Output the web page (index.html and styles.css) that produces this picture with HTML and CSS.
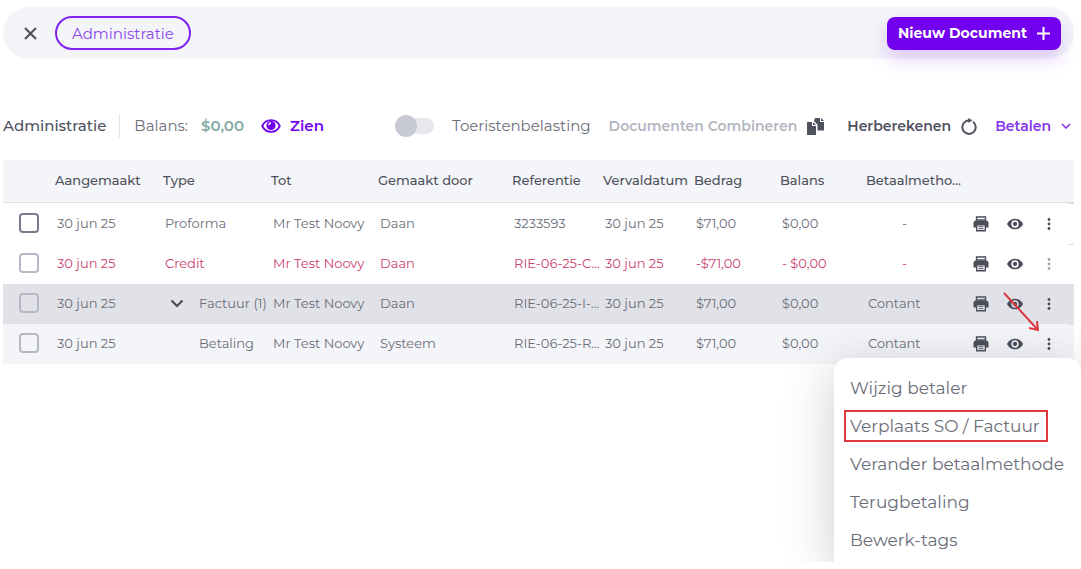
FILE: index.html
```html
<!DOCTYPE html>
<html lang="nl">
<head>
    <meta charset="UTF-8">
    <meta name="viewport" content="width=device-width, initial-scale=1.0">
    <title>Administratie</title>
    <link rel="stylesheet" href="styles.css">
</head>
<body>

<!-- Shared icons -->
<svg class="sprite" aria-hidden="true">
    <symbol id="icon-print" viewBox="0 0 16 16">
        <path d="M3.5 1h9v3h-9z" fill="none" stroke="currentColor" stroke-width="1.4"/>
        <path d="M3 4.5h10a2.5 2.5 0 0 1 2.5 2.5v4.500H.5V7A2.500 2.500 0 0 1 3 4.500z"/>
        <path d="M3.700 8.700h8.600v6H3.700z" fill="#fff" stroke="currentColor" stroke-width="1.400"/>
        <path d="M5.500 10.200h5v1h-5zM5.500 12.200h5v1h-5z"/>
    </symbol>
    <symbol id="icon-eye" viewBox="0 0 24 24">
        <path fill-rule="evenodd" d="M12 4C6.500 4 2 7.500 0 12c2 4.500 6.500 8 12 8s10-3.500 12-8c-2-4.500-6.500-8-12-8zm0 13.500a5.500 5.500 0 1 1 0-11 5.500 5.500 0 0 1 0 11zm0-2.300a3.200 3.200 0 1 0 0-6.400 3.200 3.200 0 0 0 0 6.400z"/>
    </symbol>
    <symbol id="icon-dots" viewBox="0 0 4 14">
        <circle cx="2" cy="2.500" r="1.400"/><circle cx="2" cy="7" r="1.400"/><circle cx="2" cy="11.500" r="1.400"/>
    </symbol>
</svg>

<header class="topbar">
    <button class="close" aria-label="Sluiten">
        <svg width="13" height="13" viewBox="0 0 13 13"><path d="M1 1l11 11M12 1L1 12"/></svg>
    </button>
    <button class="tab">Administratie</button>
    <button class="new-doc">Nieuw Document
        <svg width="13" height="13" viewBox="0 0 13 13"><path d="M6.500 0v13M0 6.500h13"/></svg>
    </button>
</header>

<main>
    <div class="toolbar">
        <h1>Administratie</h1>
        <div class="balance">
            <span>Balans:</span>
            <strong>$0,00</strong>
            <a class="view" href="#">
                <svg width="20" height="14" viewBox="0 0 20 14">
                    <path d="M1.200 7C3 3.200 6.200 1.200 10 1.200S17 3.200 18.800 7C17 10.800 13.800 12.800 10 12.800S3 10.800 1.200 7z" fill="none" stroke="currentColor" stroke-width="1.800"/>
                    <circle cx="10" cy="6.500" r="4.600"/>
                    <path d="M7.800 6.200A2.300 2.300 0 0 1 10 4" fill="none" stroke="#fff" stroke-width="1.300"/>
                </svg>
                Zien
            </a>
        </div>
        <label class="switch"><input type="checkbox" role="switch">Toeristenbelasting</label>
        <div class="actions">
            <button class="combine" disabled>Documenten Combineren
                <svg width="17" height="17" viewBox="0 0 17 17">
                    <path d="M0 4h5v4h4v9H0z"/><path d="M6 4l3 3H6z"/>
                    <path d="M8 0h5v4h4v8.500h-6.500V6.500L7 3z"/><path d="M14 0l3 3h-3z"/>
                </svg>
            </button>
            <button class="recalc">Herberekenen
                <svg width="16" height="17" viewBox="0 0 16 17">
                    <path d="M12 3.800A6.700 6.700 0 1 1 4.500 3.500Q6 2.500 8 2.400" fill="none" stroke="currentColor" stroke-width="2"/>
                    <path d="M7 0l4.500 2.200L7.500 5z"/>
                </svg>
            </button>
            <button class="pay">Betalen
                <svg width="10" height="6" viewBox="0 0 10 6"><path d="M1 1l4 4 4-4" fill="none" stroke="currentColor" stroke-width="1.600"/></svg>
            </button>
        </div>
    </div>

    <table class="documents">
        <colgroup>
            <col class="c-check"><col class="c-created"><col class="c-type"><col class="c-to"><col class="c-by">
            <col class="c-ref"><col class="c-due"><col class="c-amount"><col class="c-balance"><col class="c-method"><col class="c-tools">
        </colgroup>
        <thead>
            <tr>
                <th></th>
                <th>Aangemaakt</th>
                <th>Type</th>
                <th>Tot</th>
                <th>Gemaakt door</th>
                <th>Referentie</th>
                <th>Vervaldatum</th>
                <th>Bedrag</th>
                <th>Balans</th>
                <th>Betaalmetho...</th>
                <th></th>
            </tr>
        </thead>
        <tbody>
            <tr class="active">
                <td><input type="checkbox" aria-label="Proforma 3233593"></td>
                <td>30 jun 25</td>
                <td>Proforma</td>
                <td>Mr Test Noovy</td>
                <td>Daan</td>
                <td>3233593</td>
                <td>30 jun 25</td>
                <td>$71,00</td>
                <td>$0,00</td>
                <td class="none">-</td>
                <td class="tools">
                    <div class="tool-list">
                        <button aria-label="Afdrukken"><svg width="16" height="16"><use href="#icon-print"/></svg></button>
                        <button aria-label="Bekijken"><svg width="16" height="16"><use href="#icon-eye"/></svg></button>
                        <button aria-label="Meer"><svg width="4" height="14"><use href="#icon-dots"/></svg></button>
                    </div>
                </td>
            </tr>
            <tr class="credit">
                <td><input type="checkbox" aria-label="Credit"></td>
                <td>30 jun 25</td>
                <td>Credit</td>
                <td>Mr Test Noovy</td>
                <td>Daan</td>
                <td>RIE-06-25-C...</td>
                <td>30 jun 25</td>
                <td>-$71,00</td>
                <td>- $0,00</td>
                <td class="none">-</td>
                <td class="tools">
                    <div class="tool-list">
                        <button aria-label="Afdrukken"><svg width="16" height="16"><use href="#icon-print"/></svg></button>
                        <button aria-label="Bekijken"><svg width="16" height="16"><use href="#icon-eye"/></svg></button>
                        <button aria-label="Meer" disabled><svg width="4" height="14"><use href="#icon-dots"/></svg></button>
                    </div>
                </td>
            </tr>
            <tr class="expanded">
                <td><input type="checkbox" aria-label="Factuur"></td>
                <td>30 jun 25</td>
                <td>
                    <button class="toggle" aria-expanded="true">
                        <svg width="14" height="9" viewBox="0 0 14 9"><path d="M1.500 1.500L7 7l5.500-5.500" fill="none" stroke="currentColor" stroke-width="2.200"/></svg>
                        Factuur (1)
                    </button>
                </td>
                <td>Mr Test Noovy</td>
                <td>Daan</td>
                <td>RIE-06-25-I-...</td>
                <td>30 jun 25</td>
                <td>$71,00</td>
                <td>$0,00</td>
                <td>Contant</td>
                <td class="tools">
                    <div class="tool-list">
                        <button aria-label="Afdrukken"><svg width="16" height="16"><use href="#icon-print"/></svg></button>
                        <button aria-label="Bekijken"><svg width="16" height="16"><use href="#icon-eye"/></svg></button>
                        <button aria-label="Meer"><svg width="4" height="14"><use href="#icon-dots"/></svg></button>
                    </div>
                </td>
            </tr>
            <tr class="child">
                <td><input type="checkbox" aria-label="Betaling"></td>
                <td>30 jun 25</td>
                <td class="nested">Betaling</td>
                <td>Mr Test Noovy</td>
                <td>Systeem</td>
                <td>RIE-06-25-R...</td>
                <td>30 jun 25</td>
                <td>$71,00</td>
                <td>$0,00</td>
                <td>Contant</td>
                <td class="tools">
                    <div class="tool-list">
                        <button aria-label="Afdrukken"><svg width="16" height="16"><use href="#icon-print"/></svg></button>
                        <button aria-label="Bekijken"><svg width="16" height="16"><use href="#icon-eye"/></svg></button>
                        <button aria-label="Meer"><svg width="4" height="14"><use href="#icon-dots"/></svg></button>
                    </div>
                </td>
            </tr>
        </tbody>
    </table>

    <svg class="arrow" width="38" height="42" viewBox="0 0 38 42"><path d="M2 2l34 37M27 37l9 2-1-9"/></svg>
    <div class="menu">
        <button>Wijzig betaler</button>
        <button class="marked">Verplaats SO / Factuur</button>
        <button>Verander betaalmethode</button>
        <button>Terugbetaling</button>
        <button>Bewerk-tags</button>
    </div>
</main>

</body>
</html>
```
FILE: styles.css
```css
* {
    box-sizing: border-box;
}

body {
    min-height: 100vh;
    margin: 0;
    padding: 7px 7px 0 3px;
    font-family: Montserrat, Inter, sans-serif;
    font-size: 13px;
    color: #6b6d79;
    background: white;
}

button {
    font: inherit;
    color: inherit;
    background: none;
    border: none;
    padding: 0;
    cursor: pointer;
}

svg {
    fill: currentColor;
    flex-shrink: 0;
}

.sprite {
    display: none;
}

/* Top bar */
.topbar {
    display: flex;
    align-items: center;
    height: 52px;
    padding: 0 13px 0 21px;
    border-radius: 26px;
    background: #f4f5f8;
}

.close {
    display: flex;
    color: #4b4d5a;
}

.close svg, .new-doc svg {
    stroke: currentColor;
    stroke-width: 2;
}

.tab {
    height: 34px;
    margin-left: 18px;
    padding: 0 15px;
    border: 2px solid #7f22f0;
    border-radius: 17px;
    font-size: 15px;
    color: #8c48ee;
}

.new-doc {
    display: flex;
    align-items: center;
    gap: 10px;
    height: 33px;
    margin-left: auto;
    padding: 0 11px;
    border-radius: 8px;
    background: #7200ee;
    box-shadow: 0 8px 20px rgba(114, 0, 238, 0.2);
    color: white;
    font-size: 14px;
    font-weight: 700;
}

main {
    position: relative;
    padding-top: 55px;
}

/* Toolbar */
.toolbar {
    display: flex;
    align-items: center;
    height: 24px;
    margin: 0 3px 22px 0;
    font-size: 15px;
    line-height: 24px;
    white-space: nowrap;
}

.toolbar h1 {
    margin: 0;
    padding-right: 13px;
    border-right: 1px solid #e1e2e8;
    font-size: 15px;
    font-weight: 500;
    color: #4f515e;
}

.balance {
    display: flex;
    align-items: center;
    gap: 13px;
    padding-left: 14px;
}

.balance strong {
    color: #83aca6;
    font-weight: 600;
}

.view {
    display: flex;
    align-items: center;
    gap: 9px;
    margin-left: 4px;
    color: #7200ee;
    font-weight: 600;
    text-decoration: none;
}

.switch {
    display: flex;
    align-items: center;
    gap: 18px;
    margin-left: auto;
}

.switch input {
    appearance: none;
    display: flex;
    align-items: center;
    width: 35px;
    height: 16px;
    margin: 0;
    border-radius: 8px;
    background: #e7e8ec;
}

.switch input::before {
    content: "";
    width: 22px;
    height: 22px;
    margin-left: -4px;
    flex-shrink: 0;
    border-radius: 50%;
    background: #c7c9d3;
}

.actions {
    display: flex;
    gap: 18px;
    margin-left: 18px;
    font-size: 14px;
    font-weight: 600;
}

.actions button {
    display: flex;
    align-items: center;
    gap: 10px;
}

.combine {
    color: #b3b5c0;
}

.combine svg, .recalc {
    color: #4f515e;
}

.actions .recalc {
    margin-left: 5px;
}

.pay {
    color: #8634ed;
}

/* Documents table */
.documents {
    width: 100%;
    table-layout: fixed;
    border-collapse: separate;
    border-spacing: 0;
}

.c-check { width: 52px; }
.c-created, .c-type { width: 108px; }
.c-to { width: 107px; }
.c-by { width: 134px; }
.c-ref, .c-due { width: 91px; }
.c-amount, .c-balance { width: 86px; }
.c-method { width: 98px; }
.c-tools { width: 110px; }

th {
    height: 43px;
    padding: 0 0 2px;
    border-bottom: 1px solid #dfe0e5;
    background: #f4f5f8;
    color: #4f515e;
    font-weight: 500;
    text-align: left;
    white-space: nowrap;
}

td {
    height: 40px;
    padding: 0 0 2px 2px;
    white-space: nowrap;
}

.active td {
    height: 41px;
}

.credit td {
    color: #cb4370;
}

.expanded td {
    background-color: #e1e2e8;
}

.child td {
    background-color: #f4f5f8;
}

td input {
    appearance: none;
    display: block;
    width: 20px;
    height: 20px;
    margin: 0 0 0 14px;
    border: 2px solid #b6b8c5;
    border-radius: 4px;
}

.active input {
    border-color: #777b8b;
}

td.none {
    padding-left: 36px;
}

td.nested {
    padding-left: 36px;
}

.toggle {
    display: flex;
    align-items: center;
    gap: 15px;
    padding-left: 5px;
}

.toggle svg {
    color: #4b4d5a;
}

.documents .tools {
    padding-bottom: 0;
    color: #4b4d5a;
    background-image: linear-gradient(#dcdde3, #dcdde3);
    background-position: right top;
    background-size: 5px 1px;
    background-repeat: no-repeat;
}

.tool-list {
    display: flex;
    align-items: center;
    justify-content: flex-end;
    gap: 18px;
    padding-right: 23px;
}

.tool-list button {
    display: flex;
}

.tool-list button:last-child {
    padding-left: 6px;
}

.tool-list button:disabled {
    opacity: 0.5;
}

/* Context menu, opened from the last row */
.menu {
    position: absolute;
    top: 299px;
    right: -7px;
    z-index: 1;
    width: 247px;
    padding: 14px 10px 0;
    border-radius: 14px 14px 0 0;
    background: white;
    box-shadow: 0 10px 50px rgba(50, 55, 80, 0.25);
    clip-path: inset(-30px 0 0 -60px);
}

.menu button {
    display: block;
    height: 32px;
    margin-bottom: 6px;
    padding: 0 6px 0 4px;
    border: 2px solid transparent;
    color: #6b6d79;
    font-size: 17px;
    line-height: 28px;
    white-space: nowrap;
}

.menu .marked {
    border-color: #dd383d;
}

.arrow {
    position: absolute;
    top: 232px;
    right: 34px;
    z-index: 2;
    fill: none;
    stroke: #dd383d;
    stroke-width: 2;
}
```
